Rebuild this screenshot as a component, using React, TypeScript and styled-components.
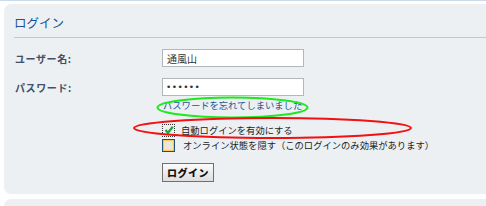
import styled, { createGlobalStyle } from "styled-components";

const GlobalStyle = createGlobalStyle`
  html, body {
    margin: 0;
    padding: 0;
    background: #ffffff;
    overflow: hidden;
  }
  body {
    font-family: "Noto Sans CJK JP", "Noto Sans", sans-serif;
  }
`;

const Page = styled.div`
  position: relative;
  width: 486px;
  height: 206px;
  overflow: hidden;
`;

const TopStrip = styled.div`
  height: 1px;
  background: #c9dbeb;
  margin-bottom: 3px;
`;

const Panel = styled.div`
  margin: 0 -12px 0 4px;
  background: #ecf0f3;
  border-radius: 7px;
  padding-bottom: 12px;
`;

const PanelTitle = styled.h2`
  margin: 0 0 0 10px;
  padding: 11px 0 6px;
  font-size: 12.5px;
  line-height: 16px;
  font-weight: normal;
  color: #1b5394;
  border-bottom: 1px solid #c4c6c8;
`;

const Form = styled.form`
  padding: 11px 0 0 11px;
`;

const Field = styled.div<{ $gap?: number }>`
  display: flex;
  align-items: center;
  height: 18px;
  margin-top: ${(p) => p.$gap ?? 0}px;
`;

const Label = styled.label`
  width: 147px;
  font-size: 10px;
  font-weight: bold;
  letter-spacing: 0.6px;
  color: #425067;
`;

const TextInput = styled.input<{ $secret?: boolean }>`
  box-sizing: border-box;
  width: 142px;
  height: 18px;
  margin: 0;
  padding: 0 ${(p) => (p.$secret ? 3 : 4)}px;
  border: 1px solid #b3b6ba;
  background: #ffffff;
  font-family: ${(p) => (p.$secret ? '"DejaVu Sans", sans-serif' : '"Noto Sans CJK JP", sans-serif')};
  font-size: ${(p) => (p.$secret ? 9 : 10)}px;
  letter-spacing: ${(p) => (p.$secret ? 0.4 : 0)}px;
  color: #333333;
  outline: none;
`;

const Options = styled.div`
  margin-left: 147px;
`;

const ForgotLink = styled.a`
  display: block;
  margin: 3px 0 0 1px;
  font-size: 9.3px;
  line-height: 12px;
  color: #1a5596;
  text-decoration: none;
`;

const CheckList = styled.div`
  margin-top: 12px;
  display: flex;
  flex-direction: column;
  gap: 1px;
`;

const CheckRow = styled.div`
  display: flex;
  align-items: center;
  height: 14px;
  font-size: 9.3px;
  color: #222222;
`;

const Box = styled.span<{ $checked?: boolean }>`
  box-sizing: border-box;
  display: inline-flex;
  align-items: center;
  justify-content: center;
  width: 13px;
  height: 13px;
  margin-right: ${(p) => (p.$checked ? 6 : 8)}px;
  border: ${(p) => (p.$checked ? "1px dotted #333333" : "1px solid #1c5180")};
  background: ${(p) => (p.$checked ? "#eef1f3" : "#e9e7dd")};
  box-shadow: ${(p) =>
    p.$checked ? "none" : "inset 0 0 0 1px #fbc75b, inset 0 0 0 2px #fde3a3"};
`;

const SubmitButton = styled.button`
  box-sizing: border-box;
  margin-top: 11px;
  width: 52px;
  height: 19px;
  padding: 0;
  border: 1px solid #707070;
  background: linear-gradient(#fbfbfb, #dedede);
  font-family: "Noto Sans CJK JP", sans-serif;
  font-size: 10px;
  font-weight: 900;
  letter-spacing: 0.5px;
  color: #111111;
`;

const NextPanel = styled.div`
  margin: 5px -12px 0 4px;
  height: 40px;
  background: #ecf0f3;
  border-radius: 7px 7px 0 0;
`;

const Marks = styled.svg`
  position: absolute;
  left: 0;
  top: 0;
  pointer-events: none;
`;

export default function App() {
  return (
    <Page>
      <GlobalStyle />
      <TopStrip />
      <Panel>
        <PanelTitle>ログイン</PanelTitle>
        <Form onSubmit={(e) => e.preventDefault()}>
          <Field>
            <Label>ユーザー名:</Label>
            <TextInput type="text" defaultValue="通風山" />
          </Field>
          <Field $gap={11}>
            <Label>パスワード:</Label>
            <TextInput $secret type="password" defaultValue="abcdef" />
          </Field>
          <Options>
            <ForgotLink href="#">パスワードを忘れてしまいました</ForgotLink>
            <CheckList>
              <CheckRow>
                <Box $checked>
                  <svg width="10" height="10" viewBox="0 0 10 10">
                    <path d="M1.5 5 L4 7.8 L8.8 1.8" fill="none" stroke="#21a33a" strokeWidth="2.2" />
                  </svg>
                </Box>
                自動ログインを有効にする
              </CheckRow>
              <CheckRow>
                <Box />
                オンライン状態を隠す（このログインのみ効果があります）
              </CheckRow>
            </CheckList>
            <SubmitButton type="submit">ログイン</SubmitButton>
          </Options>
        </Form>
      </Panel>
      <NextPanel />
      <Marks width="486" height="206">
        <ellipse cx="232.5" cy="107.5" rx="75" ry="10" fill="none" stroke="#1ee81e" strokeWidth="2" />
        <ellipse cx="272.5" cy="128" rx="138.5" ry="10" fill="none" stroke="#f21010" strokeWidth="2" />
      </Marks>
    </Page>
  );
}
